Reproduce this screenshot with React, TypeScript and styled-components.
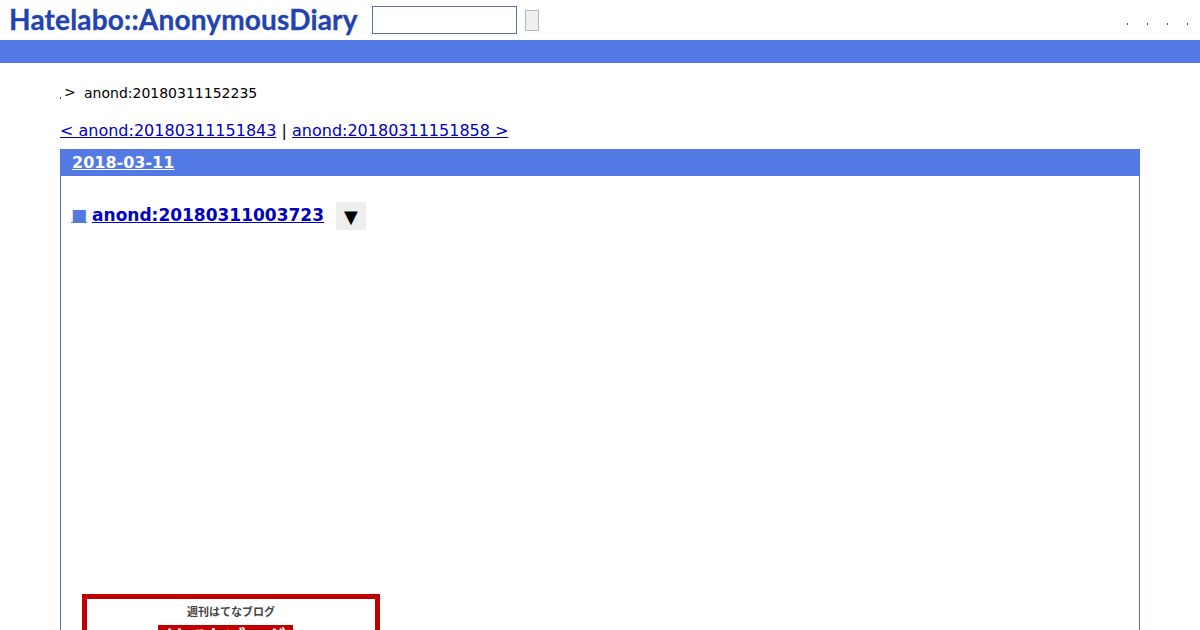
import styled, { createGlobalStyle } from "styled-components";

const GlobalStyle = createGlobalStyle`
    html, body {
        margin: 0;
        padding: 0;
        height: 630px;
        overflow: hidden;
        background: #fff;
        color: #000;
        font-family: "DejaVu Sans", sans-serif;
    }
`

export default function App() {
    return (
        <>
            <GlobalStyle />
            <Header>
                <Logo>Hatelabo::AnonymousDiary</Logo>
                <SearchInput type="text" />
                <SearchButton type="button" />
                <HeaderLinks>
                    <Dot />
                    <Dot />
                    <Dot />
                    <Dot />
                </HeaderLinks>
            </Header>
            <Bar />
            <Main>
                <Breadcrumb>
                    <TinyDot />
                    <Arrow>&gt;</Arrow>
                    <span>anond:20180311152235</span>
                </Breadcrumb>
                <Pager>
                    <a href="#prev">&lt; anond:20180311151843</a> | <a href="#next">anond:20180311151858 &gt;</a>
                </Pager>
                <Day>
                    <DayHeader>
                        <a href="#day">2018-03-11</a>
                    </DayHeader>
                    <Section>
                        <TitleRow>
                            <Title>
                                <a href="#square" className="sq">■</a>
                                <a href="#entry">anond:20180311003723</a>
                            </Title>
                            <MenuButton>▼</MenuButton>
                        </TitleRow>
                        <AdBox>
                            <AdCaption>週刊はてなブログ</AdCaption>
                            <AdBanner>はてなブログ</AdBanner>
                        </AdBox>
                    </Section>
                </Day>
            </Main>
        </>
    )
}

const Header = styled.header`
    display: flex;
    align-items: center;
    height: 40px;
    padding-left: 9px;
    box-sizing: border-box;
`

const Logo = styled.div`
    font-family: "Lato", sans-serif;
    font-weight: 700;
    font-size: 28px;
    letter-spacing: 0.18px;
    line-height: 38px;
    color: #2343b0;
    -webkit-text-stroke: 0.3px #2343b0;
    width: 363px;
    white-space: nowrap;
    margin-top: -2px;
`

const SearchInput = styled.input`
    box-sizing: border-box;
    width: 145px;
    height: 28px;
    margin: 0;
    border: 1px solid #5673a8;
    background: #fff;
`

const SearchButton = styled.button`
    box-sizing: border-box;
    width: 14px;
    height: 21px;
    margin: 0 0 0 8px;
    padding: 0;
    border: 1px solid #b5b5b5;
    background: #efefef;
`

const HeaderLinks = styled.div`
    display: flex;
    gap: 19px;
    margin-left: auto;
    padding-right: 12px;
    padding-top: 8px;
`

const Dot = styled.span`
    display: block;
    width: 1px;
    height: 2px;
    background: #555;
`

const Bar = styled.div`
    height: 23px;
    background: #5279e4;
`

const Main = styled.main`
    padding: 0 60px;
`

const Breadcrumb = styled.div`
    display: flex;
    align-items: center;
    height: 20px;
    margin-top: 20px;
    font-size: 14px;
`

const TinyDot = styled.span`
    width: 1px;
    height: 2px;
    margin: 9px 3px 0 0;
    background: #555;
`

const Arrow = styled.span`
    width: 20px;
    position: relative;
    top: -1px;
`

const Pager = styled.div`
    margin-top: 18px;
    height: 20px;
    line-height: 20px;
    font-size: 16px;

    a {
        color: #0000c0;
    }
`

const Day = styled.div`
    margin-top: 8px;
    height: 500px;
    border: 1px solid #5673a8;
    border-top: 0;
`

const DayHeader = styled.div`
    height: 27px;
    margin: 0 -1px;
    padding-left: 12px;
    line-height: 27px;
    background: #5279e4;
    font-size: 16px;
    font-weight: 700;

    a {
        color: #fff;
    }
`

const Section = styled.section`
    padding: 26px 10px 0;
`

const TitleRow = styled.div`
    display: flex;
    align-items: center;
    height: 28px;
`

const Title = styled.h3`
    margin: 0 0 2px;
    font-size: 17px;
    font-weight: 700;
    white-space: nowrap;

    a {
        color: #0000c0;
    }

    .sq {
        color: #5279e4;
        margin-right: 5px;
    }
`

const MenuButton = styled.span`
    display: flex;
    align-items: center;
    justify-content: center;
    width: 30px;
    height: 28px;
    margin-left: 12px;
    background: #eee;
    font-size: 18px;
`

const AdBox = styled.div`
    box-sizing: border-box;
    width: 298px;
    height: 200px;
    margin: 364px 0 0 11px;
    border: 5px solid #c00000;
    text-align: center;
`

const AdCaption = styled.div`
    margin-top: 4px;
    height: 17px;
    line-height: 17px;
    font-family: "Noto Sans CJK JP", sans-serif;
    font-size: 11px;
    font-weight: 700;
    color: #444;
`

const AdBanner = styled.div`
    width: 135px;
    height: 30px;
    margin: 5px 0 0 71px;
    background: #c00000;
    color: #fff;
    font-family: "Noto Sans CJK JP", sans-serif;
    font-size: 20px;
    font-weight: 700;
    line-height: 24px;
    white-space: nowrap;
    overflow: hidden;
`
